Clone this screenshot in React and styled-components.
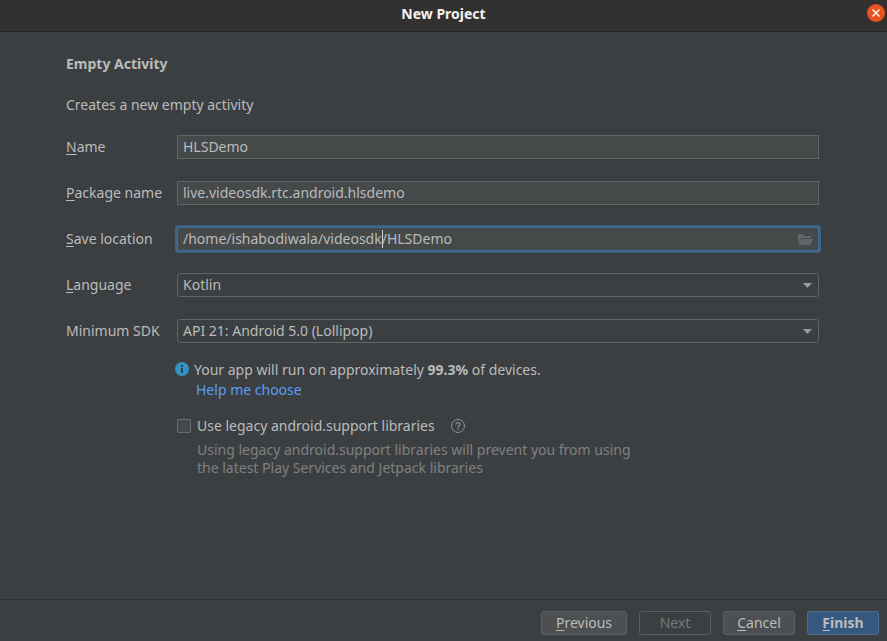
import React, { useLayoutEffect, useRef, useState } from 'react'
import styled, { createGlobalStyle } from 'styled-components'

const GlobalStyle = createGlobalStyle`
    * {
        box-sizing: border-box;
    }
    body {
        margin: 0;
        background: #3c3f41;
        color: #bbbbbb;
        font-family: "Noto Sans", "Open Sans", sans-serif;
        font-size: 14px;
        line-height: 20px;
    }
    button, input, select {
        font: inherit;
        color: inherit;
    }
`

const Window = styled.form`
    display: flex;
    flex-direction: column;
    min-height: 100vh;
    margin: 0;
`

const TitleBar = styled.header`
    display: grid;
    grid-template-columns: 18px 1fr 18px;
    align-items: start;
    height: 32px;
    padding: 4px 2px;
    background: #333030;
    border-bottom: 1px solid #222121;
`

const Title = styled.h1`
    grid-column: 2;
    margin: 0;
    font-size: 14px;
    line-height: 20px;
    text-align: center;
    color: #f4f2f1;
`

const CloseButton = styled.button`
    display: flex;
    padding: 0;
    border: 0;
    background: none;
`

const Content = styled.main`
    flex: 1;
    padding: 22px 68px 20px 66px;
`

const Heading = styled.h2`
    margin: 0 0 21px;
    font-size: 14px;
    line-height: 20px;
`

const Description = styled.p`
    margin: 0 0 20px;
`

const Fields = styled.div`
    display: grid;
    grid-template-columns: 111px 1fr;
    row-gap: 22px;
    align-items: center;
`

const Label = styled.label`
    white-space: nowrap;
`

const Key = styled.span`
    text-decoration: underline;
    text-decoration-thickness: 1px;
    text-underline-offset: 2px;
`

const TextBox = styled.input`
    display: block;
    width: 100%;
    height: 24px;
    padding: 0 5px 2px;
    border: 1px solid #646464;
    border-radius: 0;
    background: #45494a;
    outline: none;
`

const PathField = styled.div`
    position: relative;
    border-radius: 1px;
    box-shadow: 0 0 0 2px #3d6185;

    ${TextBox} {
        padding-right: 28px;
        border-color: #466d94;
        caret-color: transparent;
    }
`

const Caret = styled.span`
    position: absolute;
    top: 3px;
    width: 1px;
    height: 18px;
    background: #d0d0d0;
    pointer-events: none;
`

const BrowseButton = styled.button`
    position: absolute;
    top: 5px;
    right: 6px;
    display: flex;
    padding: 0;
    border: 0;
    background: none;
`

const SelectWrap = styled.div`
    position: relative;
`

const Select = styled.select`
    display: block;
    width: 100%;
    height: 24px;
    padding: 0 24px 0 5px;
    border: 1px solid #646464;
    border-radius: 3px;
    background: #3c3f41;
    appearance: none;
    outline: none;
`

const Arrow = styled.svg`
    position: absolute;
    top: 10px;
    right: 7px;
    pointer-events: none;
`

const Notes = styled.div`
    padding: 17px 0 0 109px;
`

const InfoRow = styled.div`
    display: grid;
    grid-template-columns: 14px 1fr;
    column-gap: 5px;

    svg {
        margin-top: 2px;
    }
`

const HelpLink = styled.a`
    grid-column: 2;
    justify-self: start;
    padding-left: 2px;
    color: #589df6;
    text-decoration: none;
`

const LegacyRow = styled.div`
    display: flex;
    align-items: center;
    margin-top: 16px;
    padding-left: 2px;
`

const CheckBox = styled.input`
    width: 14px;
    height: 14px;
    margin: 0 6px 0 0;
    border: 1px solid #6b6b6b;
    border-radius: 1px;
    background: #43494a;
    appearance: none;

    &:checked {
        background: #589df6;
    }
`

const HelpButton = styled.button`
    display: flex;
    margin-left: 16px;
    padding: 0;
    border: 0;
    background: none;
`

const Hint = styled.p`
    max-width: 472px;
    margin: 5px 0 0;
    padding-left: 22px;
    line-height: 18px;
    color: #808080;
`

const Footer = styled.footer`
    display: flex;
    justify-content: flex-end;
    gap: 12px;
    padding: 11px 8px 6px;
    border-top: 1px solid #303234;
`

const Button = styled.button`
    min-width: ${(props) => (props.$wide ? '86px' : '72px')};
    height: 24px;
    padding: 0 12px;
    border: 1px solid ${(props) => (props.$primary ? '#4c708c' : '#5e6060')};
    border-radius: 3px;
    background: ${(props) => (props.$primary ? '#365880' : '#4c5052')};
    font-weight: ${(props) => (props.$primary ? 'bold' : 'normal')};
    line-height: 20px;

    &:disabled {
        background: #3c3f41;
        color: #777777;
    }
`

const CloseIcon = () => (
    <svg width="18" height="18" viewBox="0 0 18 18" aria-hidden="true">
        <circle cx="9" cy="9" r="9" fill="#e95420" />
        <path d="M5.5 5.5l7 7M12.5 5.5l-7 7" stroke="#fff" strokeWidth="1.4" />
    </svg>
)

const FolderIcon = () => (
    <svg width="16" height="16" viewBox="0 0 16 16" fill="#5f676b" aria-hidden="true">
        <path d="M1 2h4.5L7 4h7v2H4L1 12z" />
        <path d="M4.4 7H16l-2.8 6H1.4z" />
    </svg>
)

const InfoIcon = () => (
    <svg width="14" height="14" viewBox="0 0 14 14" aria-hidden="true">
        <circle cx="7" cy="7" r="7" fill="#3592c4" />
        <path d="M6 3h2v2H6zM6 6h2v5H6z" fill="#34434b" />
    </svg>
)

const HelpIcon = () => (
    <svg width="14" height="14" viewBox="0 0 14 14" fill="none" stroke="#899195" aria-hidden="true">
        <circle cx="7" cy="7" r="6.5" />
        <path d="M5 5.5C5 3 9 3 9 5.4C9 6.8 7 6.8 7 8.5" strokeWidth="1.2" />
        <path d="M7 9.6v1.3" strokeWidth="1.3" />
    </svg>
)

const DropDown = ({ id, options }) => (
    <SelectWrap>
        <Select id={id}>
            {options.map((option) => <option key={option}>{option}</option>)}
        </Select>
        <Arrow width="9" height="5" viewBox="0 0 9 5" aria-hidden="true">
            <path d="M0 0h9L4.5 5z" fill="#9a9da0" />
        </Arrow>
    </SelectWrap>
)

const LocationField = ({ id }) => {
    const [value, setValue] = useState('/home/ishabodiwala/videosdk/HLSDemo')
    const [position, setPosition] = useState(27)
    const [left, setLeft] = useState(0)
    const input = useRef(null)

    // the caret follows the width of the text in front of it
    useLayoutEffect(() => {
        const context = document.createElement('canvas').getContext('2d')
        context.font = getComputedStyle(input.current).font
        const width = context.measureText(value.slice(0, position)).width
        setLeft(Math.round(width) + 6 - input.current.scrollLeft)
    }, [value, position])

    return (
        <PathField>
            <TextBox
                id={id}
                ref={input}
                value={value}
                onChange={(e) => setValue(e.target.value)}
                onSelect={(e) => setPosition(e.target.selectionStart)}
            />
            <Caret style={{ left }} />
            <BrowseButton type="button" aria-label="Browse"><FolderIcon /></BrowseButton>
        </PathField>
    )
}

const App = () => {
    return (
        <Window onSubmit={(e) => e.preventDefault()}>
            <GlobalStyle />
            <TitleBar>
                <Title>New Project</Title>
                <CloseButton type="button" aria-label="Close"><CloseIcon /></CloseButton>
            </TitleBar>
            <Content>
                <Heading>Empty Activity</Heading>
                <Description>Creates a new empty activity</Description>
                <Fields>
                    <Label htmlFor="name"><Key>N</Key>ame</Label>
                    <TextBox id="name" defaultValue="HLSDemo" />
                    <Label htmlFor="package"><Key>P</Key>ackage name</Label>
                    <TextBox id="package" defaultValue="live.videosdk.rtc.android.hlsdemo" />
                    <Label htmlFor="location"><Key>S</Key>ave location</Label>
                    <LocationField id="location" />
                    <Label htmlFor="language"><Key>L</Key>anguage</Label>
                    <DropDown id="language" options={['Kotlin', 'Java']} />
                    <Label htmlFor="sdk">Minimum SDK</Label>
                    <DropDown id="sdk" options={['API 21: Android 5.0 (Lollipop)']} />
                </Fields>
                <Notes>
                    <InfoRow>
                        <InfoIcon />
                        <span>Your app will run on approximately <b>99.3%</b> of devices.</span>
                        <HelpLink href="#help">Help me choose</HelpLink>
                    </InfoRow>
                    <LegacyRow>
                        <CheckBox type="checkbox" id="legacy" />
                        <label htmlFor="legacy">Use legacy android.support libraries</label>
                        <HelpButton type="button" aria-label="Help"><HelpIcon /></HelpButton>
                    </LegacyRow>
                    <Hint>
                        Using legacy android.support libraries will prevent you from using
                        the latest Play Services and Jetpack libraries
                    </Hint>
                </Notes>
            </Content>
            <Footer>
                <Button type="button" $wide><Key>P</Key>revious</Button>
                <Button type="button" disabled>Next</Button>
                <Button type="button"><Key>C</Key>ancel</Button>
                <Button type="submit" $primary><Key>F</Key>inish</Button>
            </Footer>
        </Window>
    )
}

export default App
